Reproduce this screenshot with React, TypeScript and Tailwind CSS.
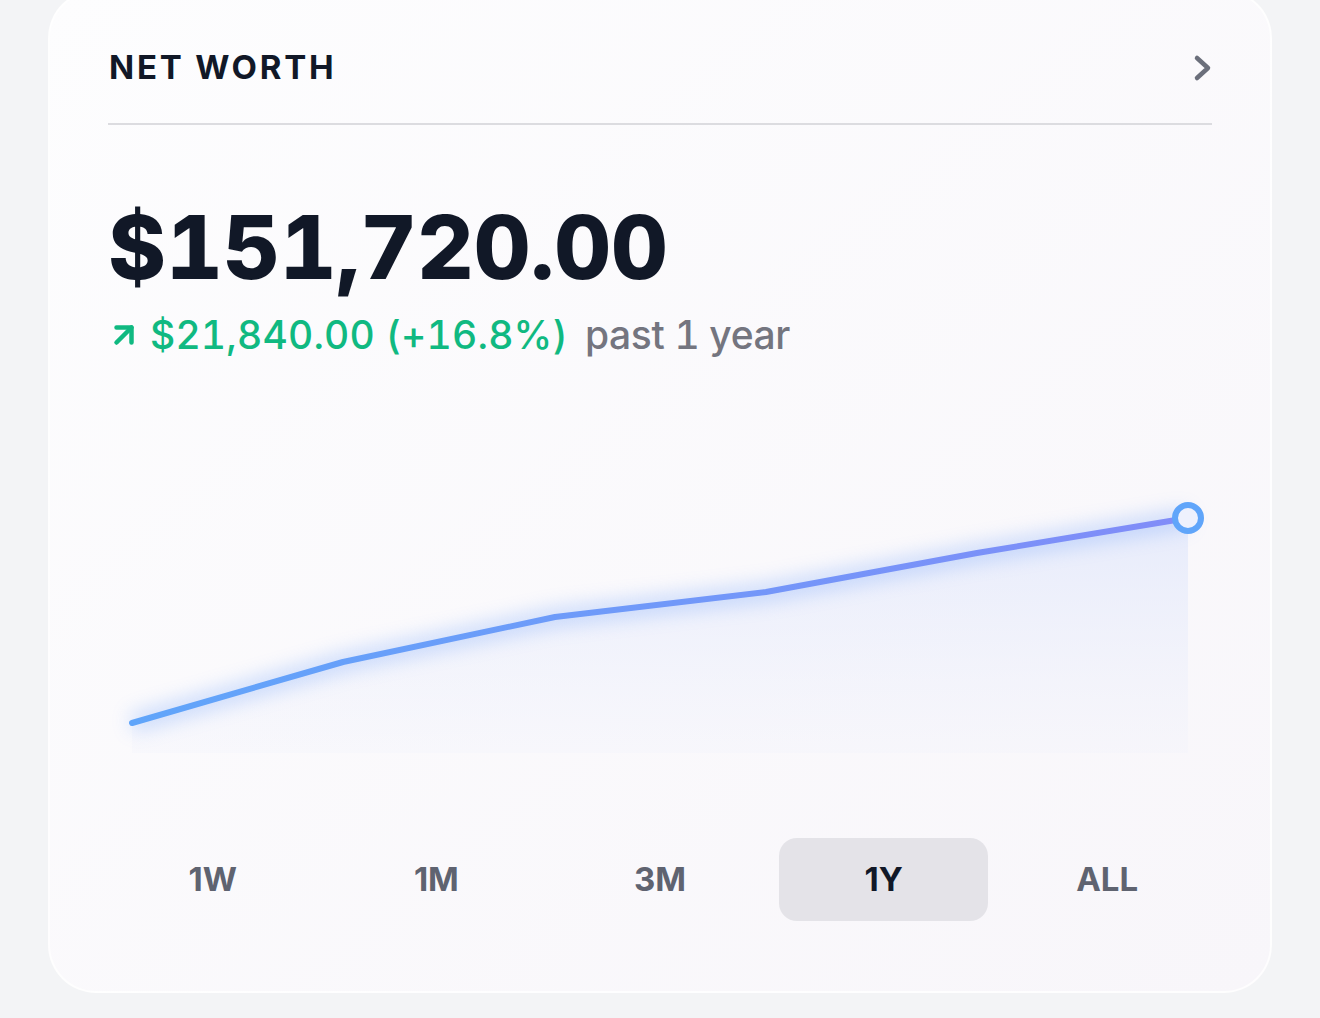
import { ArrowUpRight } from "lucide-react";

const ranges = ["1W", "1M", "3M", "1Y", "ALL"];

// chart points in svg coords (svg spans the card's content width)
const points: [number, number][] = [
  [24, 252],
  [235, 191],
  [447, 146],
  [658, 121],
  [869, 82],
  [1080, 47],
];

function NetWorthChart() {
  const line = points.map(([x, y], i) => `${i === 0 ? "M" : "L"}${x} ${y}`).join(" ");
  const area = `${line} L1080 282 L24 282 Z`;
  const [ex, ey] = points[points.length - 1];

  return (
    <svg width="1104" height="290" viewBox="0 0 1104 290" className="block">
      <defs>
        <linearGradient id="lineGrad" x1="0" y1="0" x2="1" y2="0">
          <stop offset="0%" stopColor="#60a5fa" />
          <stop offset="100%" stopColor="#818cf8" />
        </linearGradient>
        <linearGradient id="areaGrad" x1="0" y1="0" x2="0" y2="1">
          <stop offset="0%" stopColor="#d3defb" stopOpacity="0.5" />
          <stop offset="100%" stopColor="#eceffb" stopOpacity="0.2" />
        </linearGradient>
        <filter id="glow" x="-10%" y="-60%" width="120%" height="220%">
          <feGaussianBlur stdDeviation="10" />
        </filter>
      </defs>
      <path d={area} fill="url(#areaGrad)" />
      <path d={line} fill="none" stroke="#6d9ffa" strokeWidth="16" opacity="0.38" filter="url(#glow)" />
      <path d={line} fill="none" stroke="url(#lineGrad)" strokeWidth="6" strokeLinecap="round" strokeLinejoin="round" />
      <circle cx={ex} cy={ey} r="13" fill="#eef1fd" stroke="#60a5fa" strokeWidth="6" />
    </svg>
  );
}

export default function App() {
  return (
    <div className="min-h-[1018px] w-full overflow-hidden bg-[#f3f4f6]" style={{ fontFamily: "Inter, 'Noto Sans', sans-serif" }}>
      <div className="mx-[48px] mt-[-10px] rounded-[48px] border-2 border-white/80 bg-gradient-to-br from-[#fdfdfe] to-[#f8f6fa] px-[58px] pt-[46px] pb-[70px]">
        {/* Header */}
        <div className="flex h-[60px] items-center justify-between">
          <h2 className="pl-[1px] text-[33px] font-bold uppercase tracking-[0.085em] text-[#111827]">Net Worth</h2>
          <svg width="20" height="30" viewBox="0 0 20 30">
            <polyline points="5,5 16,15 5,25" fill="none" stroke="#6b6f7b" strokeWidth="4.5" strokeLinecap="round" strokeLinejoin="round" />
          </svg>
        </div>
        <div className="mt-[25px] h-[2px] bg-[#dcdce0]" />

        {/* Value */}
        <div className="mt-[78px] text-[88px] font-extrabold leading-none tabular-nums text-[#111827]">$151,720.00</div>
        <div className="mt-[24px] flex items-center text-[39px] font-medium leading-none tabular-nums">
          <ArrowUpRight className="ml-[-2px] mr-[8px] h-[36px] w-[36px] text-[#10b981]" strokeWidth={3} />
          <span className="tracking-[0.005em] text-[#10b981]">$21,840.00 (+16.8%)</span>
          <span className="ml-[17px] tracking-[-0.01em] text-[#74757f]">past 1 year</span>
        </div>

        {/* Chart */}
        <div className="mt-[117px]">
          <NetWorthChart />
        </div>

        {/* Range tabs */}
        <div className="mt-[77px] grid grid-cols-5 gap-[14px]">
          {ranges.map((r) => (
            <button
              key={r}
              className={`h-[83px] rounded-[18px] text-[33px] font-bold ${
                r === "1Y" ? "bg-[#e4e3e8] text-[#111827]" : "text-[#5f6370]"
              }`}
            >
              {r}
            </button>
          ))}
        </div>
      </div>
    </div>
  );
}
